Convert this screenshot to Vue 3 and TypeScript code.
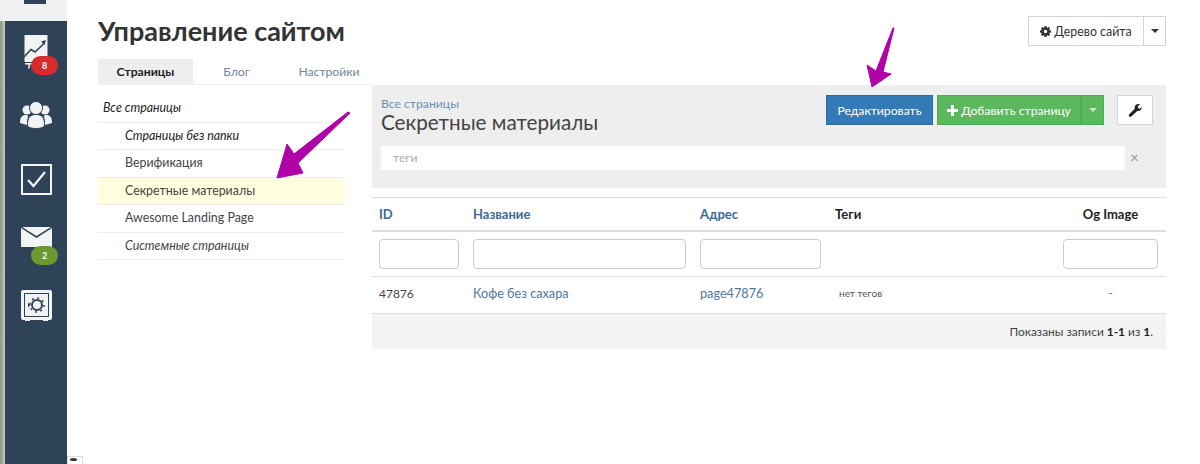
<script setup lang="ts">
const pages = [
  { label: 'Страницы без папки', italic: true },
  { label: 'Верификация' },
  { label: 'Секретные материалы', active: true },
  { label: 'Awesome Landing Page' },
  { label: 'Системные страницы', italic: true },
]
</script>

<template>
  <div class="page">
    <div class="strip"></div>
    <aside class="side">
      <div class="top-cell"><span class="top-mark"></span></div>
      <div class="cell">
        <svg class="ic" viewBox="0 0 31 36" width="31" height="36">
          <path d="M3.500 1h23v27h-23z" fill="#f2f3f4" />
          <path d="M3 23l7-7.500 4 2.500 9.500-9" fill="none" stroke="#2f4358" stroke-width="1.600" />
          <path d="M25 6l-5 1.500 3.500 3.500z" fill="#2f4358" />
          <path d="M4 29h8v1.600H9l-.5 3.900H7l.5-3.900H4z" fill="#f2f3f4" />
        </svg>
        <span class="badge badge-red">8</span>
      </div>
      <div class="cell">
        <svg class="ic" viewBox="0 0 32 28" width="32" height="28">
          <circle cx="7" cy="9" r="4.500" fill="#f2f3f4" />
          <circle cx="25" cy="9" r="4.500" fill="#f2f3f4" />
          <path d="M0 22c0-6 2-8 6-8 2 0 2 1 2 2-1 2-1 5-1 8z" fill="#f2f3f4" />
          <path d="M32 22c0-6-2-8-6-8-2 0-2 1-2 2 1 2 1 5 1 8z" fill="#f2f3f4" />
          <circle cx="16" cy="7" r="6.500" fill="#f2f3f4" stroke="#2f4358" stroke-width="1" />
          <path d="M7.500 24c0-7 2-10.500 8.500-10.500s8.500 3.500 8.500 10.500c0 2-3 3.500-8.500 3.500s-8.500-1.500-8.500-3.500z" fill="#f2f3f4" stroke="#2f4358" stroke-width="1" />
        </svg>
      </div>
      <div class="cell">
        <svg class="ic check" viewBox="0 0 31 31" width="31" height="31">
          <rect x="1" y="1" width="29" height="29" fill="none" stroke="#f2f3f4" stroke-width="2" />
          <path d="M7 16l5.500 6L24 8" fill="none" stroke="#f2f3f4" stroke-width="2.200" />
        </svg>
      </div>
      <div class="cell">
        <svg class="ic mail" viewBox="0 0 31 20" width="31" height="20">
          <path d="M0 1l15.500 10L31 1v19H0z" fill="#f2f3f4" />
          <path d="M1 0h29L15.500 9z" fill="#f2f3f4" />
        </svg>
        <span class="badge badge-green">2</span>
      </div>
      <div class="cell">
        <svg class="ic" viewBox="0 0 31 31" width="31" height="31">
          <path d="M2 0h27a2 2 0 0 1 2 2v26a2 2 0 0 1-2 2h-2v1h-5v-1H9v1H4v-1H2a2 2 0 0 1-2-2V2a2 2 0 0 1 2-2z" fill="#f2f3f4" />
          <rect x="3" y="3" width="25" height="24" fill="#2f4358" />
          <rect x="4" y="4" width="23" height="22" fill="#f2f3f4" />
          <circle cx="16" cy="15" r="5" fill="none" stroke="#2f4358" stroke-width="2" />
          <circle cx="16" cy="15" r="7" fill="none" stroke="#2f4358" stroke-width="1.500" stroke-dasharray="2 3.500" />
          <path d="M7 12.500v5l2.500-2.500z" fill="#2f4358" />
        </svg>
      </div>
    </aside>

    <main class="main">
      <header class="head">
        <h1>Управление сайтом</h1>
        <div class="split top-split">
          <button class="btn plain grow">
            <svg viewBox="0 0 12 12" width="11" height="11">
              <path d="M5 0h2l.300 1.500 1 .400L9.600 1 11 2.400l-.900 1.300.400 1L12 5v2l-1.500.300-.400 1 .900 1.300L9.600 11l-1.300-.900-1 .400L7 12H5l-.300-1.500-1-.400L2.400 11 1 9.600l.900-1.300-.400-1L0 7V5l1.500-.300.400-1L1 2.400 2.400 1l1.300.900 1-.400z" fill="#333" />
              <circle cx="6" cy="6" r="1.800" fill="#fff" />
            </svg>
            Дерево сайта
          </button>
          <button class="btn plain caret-btn"><i class="caret"></i></button>
        </div>
      </header>

      <nav class="tabs">
        <span class="tab on">Страницы</span>
        <span class="tab">Блог</span>
        <span class="tab">Настройки</span>
      </nav>

      <div class="columns">
        <ul class="tree">
          <li class="root">Все страницы</li>
          <li v-for="p in pages" :key="p.label" :class="{ em: p.italic, active: p.active }">{{ p.label }}</li>
        </ul>

        <section class="content">
          <div class="panel">
            <div class="panel-top">
              <div class="titles">
                <a class="crumb">Все страницы</a>
                <h2>Секретные материалы</h2>
              </div>
              <div class="actions">
                <button class="btn blue">Редактировать</button>
                <div class="split green-split">
                  <button class="btn green grow">
                    <svg viewBox="0 0 11 11" width="11" height="11"><path d="M4 0h3v4h4v3H7v4H4V7H0V4h4z" fill="#fff" /></svg>
                    Добавить страницу
                  </button>
                  <button class="btn green caret-btn"><i class="caret light"></i></button>
                </div>
                <button class="btn plain wrench">
                  <svg viewBox="0 0 14 14" width="14" height="14">
                    <path d="M1 11.500L6.800 5.700C6.200 3.500 7.500 1 10.500 1c.700 0 1.200.100 1.500.300L9.700 3.500l.500 1.800 1.800.500 1.700-2c.300 2.800-2 4.800-4.500 4.200L3 13.800c-1 .700-2.800-1-2-2.300z" fill="#222" />
                  </svg>
                </button>
              </div>
            </div>
            <div class="tag-row">
              <div class="tag-input">теги</div>
              <span class="clear">×</span>
            </div>
          </div>

          <div class="grid heads">
            <a class="th link">ID</a>
            <a class="th link">Название</a>
            <a class="th link">Адрес</a>
            <span class="th">Теги</span>
            <span class="th center">Og Image</span>
          </div>
          <div class="grid filters">
            <input class="field" />
            <input class="field" />
            <input class="field" />
            <span></span>
            <input class="field" />
          </div>
          <div class="grid row">
            <span class="num">47876</span>
            <a class="link-cell">Кофе без сахара</a>
            <a class="link-cell">page47876</a>
            <span class="none">нет тегов</span>
            <span class="center dash">-</span>
          </div>
          <div class="summary">Показаны записи&nbsp;<b>1-1</b>&nbsp;из&nbsp;<b>1</b>.</div>
        </section>
      </div>
    </main>

    <svg class="arrow arrow-left" width="85" height="75" viewBox="0 0 85 75">
      <path d="M80 5L28 55l5 10-26 5 10-34 7 10L78 4z" fill="#b000a8" stroke="#b000a8" stroke-width="1" stroke-linejoin="round" />
    </svg>
    <svg class="arrow arrow-top" width="36" height="70" viewBox="0 0 36 70">
      <path d="M32 4L21 48l8 2-19 13-5-22 9 6L31 4z" fill="#b000a8" stroke="#b000a8" stroke-width="1" stroke-linejoin="round" />
    </svg>
    <div class="debug"><i></i></div>
  </div>
</template>

<style>
html, body { margin: 0; background: #fff; overflow: hidden; }
</style>

<style scoped>
.page {
  display: flex;
  position: relative;
  height: 464px;
  overflow: hidden;
  font-family: Lato, "Open Sans", "Liberation Sans", sans-serif;
  font-size: 12.200px;
  color: #333;
}
.strip { width: 5px; flex: none; background: linear-gradient(90deg, #8d9a80, #a9b19a 60%, #cfd3c6); }
.side { width: 62px; flex: none; background: #2f4358; display: flex; flex-direction: column; }
.top-cell { height: 21px; margin-left: -5px; background: #f1f1f1; display: flex; justify-content: center; padding-left: 5px; }
.top-mark { width: 22px; height: 4px; background: #2f4358; margin-left: -2px; }
.cell {
  height: 63.300px;
  position: relative;
  display: flex;
  align-items: center;
  justify-content: center;
  box-sizing: border-box;
  border-bottom: 1px solid #2a3c50;
}
.ic { display: block; }
.check { margin-top: 2px; }
.mail { margin-bottom: 10px; }
.badge {
  position: absolute;
  left: 26px;
  top: 35px;
  width: 27px;
  height: 19px;
  border-radius: 10px;
  color: #fff;
  font-size: 9px;
  font-weight: 700;
  line-height: 19px;
  text-align: center;
}
.badge-red { background: #d62c2c; }
.badge-green { background: #6b9a2f; }

.main { flex: 1; padding: 0 34px 0 31px; min-width: 0; }
.head { display: flex; justify-content: space-between; align-items: flex-start; height: 59px; }
h1 { margin: 16px 0 0; font-size: 27px; line-height: 30px; font-weight: 700; color: #333; }
.split { display: flex; }
.btn {
  font: inherit;
  height: 30px;
  box-sizing: border-box;
  border: 1px solid #d4d4d4;
  background: #fff;
  color: #333;
  padding: 0;
  margin: 0;
  display: flex;
  align-items: center;
  justify-content: center;
  gap: 3px;
  white-space: nowrap;
}
.top-split { margin-top: 16px; width: 138px; font-size: 12.400px; }
.grow { flex: 1; }
.caret-btn { width: 23px; border-left-width: 0; flex: none; }
.top-split .caret-btn { border-left: 1px solid #d4d4d4; margin-left: -1px; }
.caret { width: 0; height: 0; border: 4px solid transparent; border-top-color: #333; border-bottom: 0; }
.caret.light { border-top-color: #cfe8cf; }

.tabs { display: flex; height: 26px; border-bottom: 1px solid #f0f0f0; width: 274px; box-sizing: border-box; }
.tab { line-height: 26px; color: #6d86a0; text-align: center; }
.tab:nth-child(1) { width: 95px; background: #eee; color: #222; font-weight: 700; }
.tab:nth-child(2) { width: 87px; }
.tab:nth-child(3) { width: 92px; padding-left: 6px; box-sizing: border-box; }

.columns { display: flex; gap: 27px; }
.tree { list-style: none; margin: 0; padding: 0; width: 247px; flex: none; font-size: 12.400px; }
.tree li {
  height: 27.500px;
  line-height: 26.500px;
  box-sizing: border-box;
  border-bottom: 1px solid #ececec;
  padding-left: 27px;
  color: #444;
}
.tree .root { height: 37.500px; line-height: 46px; padding-left: 5px; font-style: italic; color: #222; }
.tree .em { font-style: italic; color: #222; }
.tree .active { background: #ffffe0; color: #444; }
.tree li:last-child { font-style: italic; color: #444; }

.content { flex: 1; min-width: 0; }
.panel { height: 103px; background: #eee; padding: 10px 13px 0 9px; box-sizing: border-box; }
.panel-top { display: flex; justify-content: space-between; height: 51px; }
.crumb { display: block; color: #6d8fb3; line-height: 17px; }
h2 { margin: -3px 0 0; font-size: 20.700px; line-height: 26px; font-weight: 400; color: #444; }
.actions { display: flex; }
.blue { width: 107px; background: #337ab7; border-color: #2e6da4; color: #fff; margin-right: 4px; }
.green-split { width: 167px; margin-right: 13px; }
.green { background: #5cb85c; border-color: #4cae4c; color: #fff; }
.green-split .caret-btn { border-left: 1px solid #4cae4c; }
.wrench { width: 36px; }
.tag-row { display: flex; align-items: center; }
.tag-input { width: 744px; height: 24px; background: #fff; color: #aaa; line-height: 24px; padding-left: 12px; box-sizing: border-box; flex: none; }
.clear { margin-left: 5px; color: #999; font-size: 15px; line-height: 20px; margin-top: -2px; }

.grid {
  display: grid;
  grid-template-columns: 94px 227px 135px 228px 110px;
  box-sizing: border-box;
  border-bottom: 1px solid #ddd;
  align-items: center;
}
.grid > * { margin-left: 7px; margin-right: 7px; }
.grid > :last-child { margin-right: 8px; }
.heads { margin-top: 9px; height: 35px; border-top: 1px solid #ddd; border-bottom-width: 2px; font-size: 13px; font-weight: 700; }
.th { color: #222; }
.link { color: #3a6a99; }
.center { text-align: center; }
.filters { height: 45px; padding: 7px 0; }
.field {
  height: 30px;
  min-width: 0;
  box-sizing: border-box;
  border: 1px solid #ccc;
  border-radius: 4px;
  background: #fff;
  padding: 0;
}
.row { height: 37px; padding-bottom: 4px; font-size: 12.700px; }
.num { font-size: 12px; color: #444; }
.link-cell { color: #50769c; }
.none { font-size: 10px; margin-left: 11px; color: #555; }
.dash { color: #777; }
.summary { height: 35px; background: #f3f3f3; display: flex; justify-content: flex-end; align-items: center; padding-right: 13px; font-size: 11.900px; color: #444; }
.summary b { color: #222; }

.arrow { position: absolute; }
.arrow-left { left: 270px; top: 108px; }
.arrow-top { left: 862px; top: 24px; }
.debug { position: absolute; left: 67px; top: 456px; width: 16px; height: 10px; box-sizing: border-box; border: 1px solid #ddd; background: #fff; }
.debug i { display: block; width: 7px; height: 3px; margin: 1px 0 0 2px; background: #333; border-radius: 50%; }
</style>
